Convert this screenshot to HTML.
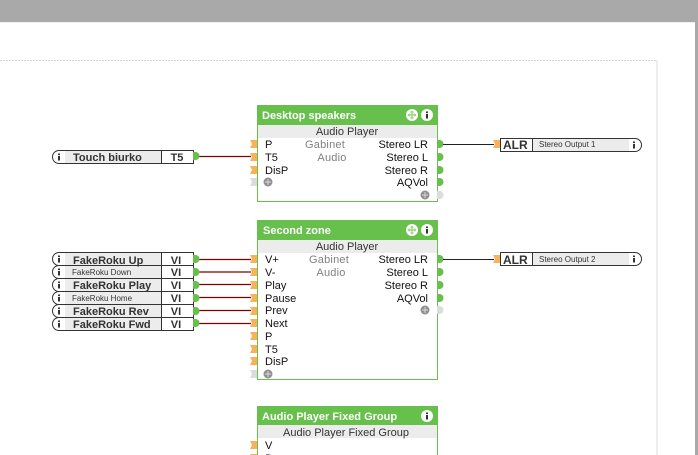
<!DOCTYPE html>
<html><head><meta charset="utf-8"><style>
html,body{margin:0;padding:0;background:#fff;width:698px;height:455px;overflow:hidden}
svg{display:block;position:absolute;left:0;top:0}
text{font-family:"Liberation Sans",sans-serif;font-size:11px;fill:#111}
.t{font-weight:bold;fill:#fff;font-size:11px}
.c{text-anchor:middle;fill:#333}
.g{text-anchor:middle;fill:#808080;letter-spacing:.2px}
.r{text-anchor:end}
.n{font-weight:bold;fill:#333}
.s{font-size:8px;fill:#333}
.v{font-weight:bold;fill:#333;text-anchor:middle;font-size:11px}
.a{font-weight:bold;fill:#333;font-size:12px}
</style></head><body>
<svg width="698" height="455" viewBox="0 0 698 455" xmlns="http://www.w3.org/2000/svg">
<defs>
<polygon id="in" points="250,-4 257,-4 257,4 250,4 252,0" fill="#f7b35a"/>
<polygon id="ing" points="250,-4 257,-4 257,4 250,4 252,0" fill="#dcdcdc"/>
<path id="out" d="M-1,-4H1.500A4,4 0 0 1 1.500,4H-1Z" fill="#68c04c"/>
<path id="outg" d="M-1,-4H1.500A4,4 0 0 1 1.500,4H-1Z" fill="#dcdcdc"/>
<g id="plus"><circle r="4.500" fill="#909090"/><path d="M-3,0H3M0,-3V3" stroke="#d8d8d8" stroke-width="1"/></g>
<g id="info"><circle r="6" fill="#fff"/><rect x="-1" y="-3.500" width="2" height="1.600" fill="#333"/><rect x="-1" y="-1" width="2" height="4.500" fill="#333"/></g>
<g id="move"><circle r="6" fill="#fff"/><path d="M-3.500,0H3.500M0,-3.500V3.500" stroke="#8fd078" stroke-width="1.200"/><path d="M-4.500,0L-2.500,-2V2ZM4.500,0L2.500,-2V2ZM0,-4.500L-2,-2.500H2ZM0,4.500L-2,2.500H2Z" fill="#8fd078"/></g>
<g id="sinfo"><rect x="-1" y="-3.500" width="2" height="1.600" fill="#333"/><rect x="-1" y="-1" width="2" height="4.500" fill="#333"/></g>
</defs>

<rect x="0" y="0" width="698" height="22" fill="#a9a9a9"/>
<rect x="695" y="0" width="3" height="455" fill="#a9a9a9"/>
<rect x="0" y="22" width="695" height="1" fill="#f1f1f1"/>
<line x1="0" y1="60.500" x2="657" y2="60.500" stroke="#d4d4d4" stroke-dasharray="2 1"/>
<rect x="656" y="60" width="2" height="395" fill="#eee"/>

<!-- Block 1 -->
<rect x="257.500" y="105.500" width="180" height="96" fill="#fff" stroke="#68c04c"/>
<rect x="257" y="105" width="181" height="20" fill="#68c04c"/>
<rect x="258" y="125" width="179" height="13" fill="#ececec"/>
<text class="t" x="262" y="119">Desktop speakers</text>
<use href="#move" x="412" y="115"/><use href="#info" x="427" y="115"/>
<text class="c" x="347" y="135">Audio Player</text>
<use href="#in" y="144"/><use href="#in" y="157"/><use href="#in" y="170"/><use href="#ing" y="182"/>
<text x="265" y="148">P</text><text x="265" y="161">T5</text><text x="265" y="174">DisP</text>
<use href="#plus" x="268" y="182"/>
<text class="g" x="325" y="148">Gabinet</text><text class="g" x="332" y="161">Audio</text>
<text class="r" x="428" y="148">Stereo LR</text><text class="r" x="428" y="161">Stereo L</text><text class="r" x="428" y="174">Stereo R</text><text class="r" x="428" y="186">AQVol</text>
<use href="#out" x="438" y="144"/><use href="#out" x="438" y="157"/><use href="#out" x="438" y="170"/><use href="#out" x="438" y="182"/><use href="#outg" x="438" y="195"/>
<use href="#plus" x="425" y="195"/>

<!-- Block 2 -->
<rect x="257.500" y="220.500" width="180" height="159" fill="#fff" stroke="#68c04c"/>
<rect x="257" y="220" width="181" height="20" fill="#68c04c"/>
<rect x="258" y="240" width="179" height="13" fill="#ececec"/>
<text class="t" x="263" y="234">Second zone</text>
<use href="#move" x="412" y="230"/><use href="#info" x="427" y="230"/>
<text class="c" x="347" y="250">Audio Player</text>
<use href="#in" y="259"/><use href="#in" y="272"/><use href="#in" y="285"/><use href="#in" y="298"/><use href="#in" y="311"/><use href="#in" y="323"/><use href="#in" y="336"/><use href="#in" y="349"/><use href="#in" y="361"/><use href="#ing" y="374"/>
<text x="265" y="263">V+</text><text x="265" y="276">V-</text><text x="265" y="289">Play</text><text x="265" y="302">Pause</text><text x="265" y="314">Prev</text><text x="265" y="327">Next</text><text x="265" y="340">P</text><text x="265" y="353">T5</text><text x="265" y="365">DisP</text>
<use href="#plus" x="268" y="374"/>
<text class="g" x="329" y="263">Gabinet</text><text class="g" x="331" y="276">Audio</text>
<text class="r" x="428" y="263">Stereo LR</text><text class="r" x="428" y="276">Stereo L</text><text class="r" x="428" y="289">Stereo R</text><text class="r" x="428" y="302">AQVol</text>
<use href="#out" x="438" y="259"/><use href="#out" x="438" y="272"/><use href="#out" x="438" y="285"/><use href="#out" x="438" y="298"/><use href="#outg" x="438" y="310"/>
<use href="#plus" x="425" y="310"/>

<!-- Block 3 -->
<rect x="257.500" y="406.500" width="180" height="60" fill="#fff" stroke="#68c04c"/>
<rect x="257" y="406" width="181" height="19" fill="#68c04c"/>
<rect x="258" y="425" width="179" height="13" fill="#ececec"/>
<text class="t" x="262" y="420">Audio Player Fixed Group</text>
<use href="#info" x="427" y="416"/>
<text class="c" x="346" y="436">Audio Player Fixed Group</text>
<use href="#in" y="445"/><use href="#in" y="458"/>
<text x="265" y="449">V</text><text x="265" y="462">B</text>

<!-- Wires -->
<g stroke="#800000" stroke-width="1.200" fill="none">
<path d="M199 156.500H251"/>
<path d="M199 259.500H251M199 272H251M199 284.500H251M199 297.500H251M199 310.500H251M199 323.500H251"/>
</g>
<g stroke="#222" stroke-width="1.100" fill="none">
<path d="M443 144.500H494M443 259.500H494"/>
</g>

<!-- Left inputs -->
<g stroke="#333" stroke-width="1">
<path d="M193.500 150.500H59A6.500 6.500 0 0 0 59 163.500H193.500Z" fill="#fff"/>
<rect x="65" y="151" width="97" height="12" fill="#ececec" stroke="none"/>
<path d="M161.500 150.500V163.500"/>
</g>
<use href="#sinfo" x="59" y="157"/>
<text class="n" x="73" y="161">Touch biurko</text>
<text class="v" x="177" y="161">T5</text>
<use href="#out" x="194" y="156"/>

<g stroke="#333" stroke-width="1">
<path d="M193.500 252.500H59A6.500 6.500 0 0 0 59 265.500H193.500Z" fill="#fff"/><rect x="65" y="253" width="97" height="12" fill="#ececec" stroke="none"/>
<path d="M193.500 265.500H59A6.500 6.500 0 0 0 59 278.500H193.500Z" fill="#fff"/><rect x="65" y="266" width="97" height="12" fill="#ececec" stroke="none"/>
<path d="M193.500 278.500H59A6.500 6.500 0 0 0 59 291.500H193.500Z" fill="#fff"/><rect x="65" y="279" width="97" height="12" fill="#ececec" stroke="none"/>
<path d="M193.500 291.500H59A6.500 6.500 0 0 0 59 304.500H193.500Z" fill="#fff"/><rect x="65" y="292" width="97" height="12" fill="#ececec" stroke="none"/>
<path d="M193.500 304.500H59A6.500 6.500 0 0 0 59 317.500H193.500Z" fill="#fff"/><rect x="65" y="305" width="97" height="12" fill="#ececec" stroke="none"/>
<path d="M193.500 317.500H59A6.500 6.500 0 0 0 59 330.500H193.500Z" fill="#fff"/><rect x="65" y="318" width="97" height="12" fill="#ececec" stroke="none"/>
<path d="M161.500 252.500V330.500"/>
</g>
<use href="#sinfo" x="59" y="259"/><use href="#sinfo" x="59" y="272"/><use href="#sinfo" x="59" y="285"/><use href="#sinfo" x="59" y="298"/><use href="#sinfo" x="59" y="311"/><use href="#sinfo" x="59" y="324"/>
<text class="n" x="73" y="264">FakeRoku Up</text>
<text class="s" x="72" y="275">FakeRoku Down</text>
<text class="n" x="73" y="289">FakeRoku Play</text>
<text class="s" x="72" y="301">FakeRoku Home</text>
<text class="n" x="73" y="315">FakeRoku Rev</text>
<text class="n" x="73" y="328">FakeRoku Fwd</text>
<text class="v" x="176" y="264">VI</text><text class="v" x="176" y="276">VI</text><text class="v" x="176" y="289">VI</text><text class="v" x="176" y="302">VI</text><text class="v" x="176" y="315">VI</text><text class="v" x="176" y="328">VI</text>
<use href="#out" x="194" y="259"/><use href="#out" x="194" y="272"/><use href="#out" x="194" y="285"/><use href="#out" x="194" y="298"/><use href="#out" x="194" y="311"/><use href="#out" x="194" y="323"/>

<!-- Right outputs -->
<g stroke="#333" stroke-width="1">
<path d="M500.500 138.500H635A6.500 6.500 0 0 1 635 151.500H500.500Z" fill="#fff"/><rect x="533" y="139" width="96" height="12" fill="#ececec" stroke="none"/><path d="M532.500 138.500V151.500"/>
<path d="M500.500 252.500H635A6.500 6.500 0 0 1 635 265.500H500.500Z" fill="#fff"/><rect x="533" y="253" width="96" height="12" fill="#ececec" stroke="none"/><path d="M532.500 252.500V265.500"/>
</g>
<use href="#in" x="243" y="144"/><use href="#in" x="243" y="259"/>
<text class="a" x="503" y="149">ALR</text><text class="a" x="503" y="264">ALR</text>
<text class="s" x="539" y="147">Stereo Output 1</text><text class="s" x="539" y="262">Stereo Output 2</text>
<use href="#sinfo" x="634" y="145"/><use href="#sinfo" x="634" y="259"/>
</svg>
</body></html>
